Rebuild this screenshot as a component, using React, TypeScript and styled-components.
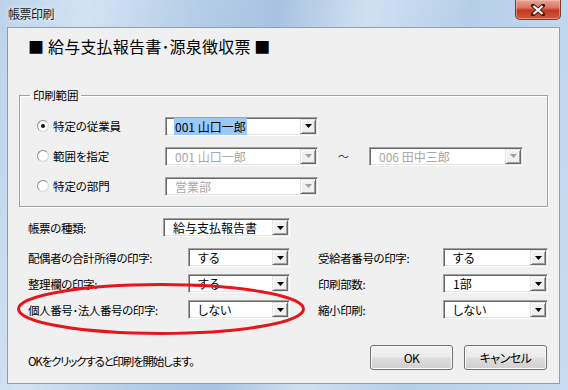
import styled, { createGlobalStyle } from "styled-components";

const GlobalStyle = createGlobalStyle`
    html, body {
        margin: 0;
        padding: 0;
        background: #ffffff;
    }
    body {
        font-family: "Noto Sans CJK JP", "Noto Sans", "Liberation Sans", sans-serif;
        font-feature-settings: "palt";
        color: #000000;
    }
`;

const Window = styled.div`
    position: relative;
    width: 568px;
    height: 390px;
    display: flex;
    flex-direction: column;
    box-sizing: border-box;
    overflow: hidden;
    background: linear-gradient(
        100deg,
        #bcd3eb 0%,
        #d3e3f3 14%,
        #b3cce7 32%,
        #a8c3e1 44%,
        #cfe0f2 58%,
        #b6cfe9 74%,
        #c8dcf0 100%
    );
`;

const TitleBar = styled.div`
    height: 27px;
    display: flex;
    align-items: flex-start;
    flex-shrink: 0;
`;

const Title = styled.div`
    margin: 6px 0 0 8px;
    font-size: 12px;
    line-height: 16px;
    letter-spacing: -0.5px;
    color: #1b1b1b;
    text-shadow: 0 0 6px rgba(255, 255, 255, 0.9);
`;

const CloseButton = styled.div`
    margin-left: auto;
    margin-right: 7px;
    width: 46px;
    height: 20px;
    box-sizing: border-box;
    display: flex;
    align-items: center;
    justify-content: center;
    border: 1px solid #7a3a30;
    border-top: none;
    border-radius: 0 0 5px 5px;
    background: linear-gradient(180deg, #e6a898 0%, #d9735f 40%, #c2391f 55%, #cf5a3c 100%);
    box-shadow: inset 0 0 0 1px rgba(255, 200, 190, 0.45);
`;

const Client = styled.div`
    flex: 1;
    margin: 0 8px 6px 7px;
    border: 1px solid #8a9db3;
    background: #f0f0f0;
    display: flex;
    flex-direction: column;
`;

const Heading = styled.div`
    margin: 10px 0 0 20px;
    font-size: 16px;
    line-height: 16px;
    letter-spacing: 0.2px;
`;

const Group = styled.fieldset`
    margin: 35px 11px 0 11px;
    padding: 10px 0 5px 0;
    border: 1px solid #a0a0a0;
    box-shadow: inset 1px 1px 0 #ffffff, 1px 1px 0 #ffffff;
    min-width: 0;
`;

const Legend = styled.legend`
    margin-left: 10px;
    padding: 0 3px;
    font-size: 11.5px;
    line-height: 12px;
    letter-spacing: -0.2px;
`;

const RangeRow = styled.div`
    height: 30px;
    padding-left: 17px;
    display: flex;
    align-items: center;
`;

const RadioLabel = styled.label`
    width: 128px;
    display: flex;
    align-items: center;
    gap: 4px;
    font-size: 11.5px;
    letter-spacing: -0.1px;
`;

const Radio = styled.span<{ $checked?: boolean }>`
    width: 12px;
    height: 12px;
    box-sizing: border-box;
    border-radius: 50%;
    border: 1px solid #8f8f8f;
    border-right-color: #d8d8d8;
    border-bottom-color: #d8d8d8;
    background: radial-gradient(circle at 50% 50%, #ffffff 55%, #e8e8e8 100%);
    display: flex;
    align-items: center;
    justify-content: center;
    &::after {
        content: "";
        width: 4px;
        height: 4px;
        border-radius: 50%;
        background: ${(p) => (p.$checked ? "#111111" : "transparent")};
    }
`;

const Tilde = styled.span`
    width: 51px;
    text-align: center;
    font-size: 11px;
    color: #333333;
`;

const Combo = styled.div<{ $w: number; $disabled?: boolean }>`
    width: ${(p) => p.$w}px;
    height: 19px;
    box-sizing: border-box;
    display: flex;
    align-items: center;
    padding: 1px;
    background: #ffffff;
    border: 1px solid;
    border-color: #a0a0a0 #ffffff #ffffff #a0a0a0;
    box-shadow: inset 1px 1px 0 #696969, inset -1px -1px 0 #e3e3e3;
    color: ${(p) => (p.$disabled ? "#a8a8a8" : "#000000")};
    flex-shrink: 0;
`;

const ComboText = styled.span`
    flex: 1;
    padding-left: 8px;
    font-size: 12px;
    line-height: 15px;
    white-space: nowrap;
`;

const Selected = styled.span`
    background: #99c9f4;
    padding: 0 1px;
    margin-left: -1px;
`;

const DropButton = styled.span<{ $disabled?: boolean }>`
    width: 16px;
    height: 15px;
    box-sizing: border-box;
    display: flex;
    align-items: center;
    justify-content: center;
    background: #f0f0f0;
    border: 1px solid;
    border-color: #e3e3e3 #696969 #696969 #e3e3e3;
    box-shadow: inset 1px 1px 0 #ffffff, inset -1px -1px 0 #a0a0a0;
    color: ${(p) => (p.$disabled ? "#a0a0a0" : "#000000")};
`;

const Options = styled.div`
    margin: 11px 11px 0 20px;
    display: flex;
    flex-direction: column;
    gap: 7px;
`;

const OptionRow = styled.div<{ $first?: boolean }>`
    display: flex;
    align-items: center;
    margin-bottom: ${(p) => (p.$first ? "4px" : "0")};
`;

const Label = styled.span<{ $w: number }>`
    width: ${(p) => p.$w}px;
    flex-shrink: 0;
    font-size: 11.5px;
    letter-spacing: -0.4px;
    white-space: nowrap;
`;

const Spacer = styled.span`
    width: 28px;
    flex-shrink: 0;
`;

const Footer = styled.div`
    margin: 26px 12px 0 20px;
    display: flex;
    align-items: center;
`;

const Hint = styled.span`
    flex: 1;
    margin-top: 6px;
    font-size: 11.5px;
    letter-spacing: -1.2px;
`;

const Button = styled.button`
    width: 83px;
    height: 25px;
    margin-left: 11px;
    box-sizing: border-box;
    border: 1px solid #707070;
    border-radius: 3px;
    background: linear-gradient(180deg, #f2f2f2 0%, #ebebeb 48%, #dddddd 52%, #cfcfcf 100%);
    box-shadow: inset 0 0 0 1px #fcfcfc;
    font-family: inherit;
    font-feature-settings: "palt";
    font-size: 12px;
    letter-spacing: -0.5px;
    color: #000000;
    padding: 0;
`;

const Marker = styled.svg`
    position: absolute;
    left: 16px;
    top: 282px;
    pointer-events: none;
`;

const Arrow = () => (
    <svg width="7" height="4" viewBox="0 0 7 4">
        <path d="M0 0H7L3.5 4Z" fill="currentColor" />
    </svg>
);

type SelectProps = {
    width: number;
    value: React.ReactNode;
    disabled?: boolean;
};
const Select = (props: SelectProps) => {
    const { width, value, disabled } = props;
    return (
        <Combo $w={width} $disabled={disabled}>
            <ComboText>{value}</ComboText>
            <DropButton $disabled={disabled}>
                <Arrow />
            </DropButton>
        </Combo>
    );
};

const App = () => {
    return (
        <Window>
            <GlobalStyle />
            <TitleBar>
                <Title>帳票印刷</Title>
                <CloseButton>
                    <svg width="14" height="12" viewBox="0 0 14 12">
                        <path
                            d="M2 1.5L7 6M12 1.5L7 6M2 10.5L7 6M12 10.5L7 6"
                            stroke="#4a1a12"
                            strokeWidth="4"
                            strokeLinecap="square"
                        />
                        <path
                            d="M2.5 2L11.5 10M11.5 2L2.5 10"
                            stroke="#ffffff"
                            strokeWidth="2.2"
                        />
                    </svg>
                </CloseButton>
            </TitleBar>
            <Client>
                <Heading>■ 給与支払報告書･源泉徴収票 ■</Heading>

                <Group>
                    <Legend>印刷範囲</Legend>
                    <RangeRow>
                        <RadioLabel>
                            <Radio $checked />
                            特定の従業員
                        </RadioLabel>
                        <Select width={153} value={<Selected>001 山口一郎</Selected>} />
                    </RangeRow>
                    <RangeRow>
                        <RadioLabel>
                            <Radio />
                            範囲を指定
                        </RadioLabel>
                        <Select width={153} value="001 山口一郎" disabled />
                        <Tilde>～</Tilde>
                        <Select width={154} value="006 田中三郎" disabled />
                    </RangeRow>
                    <RangeRow>
                        <RadioLabel>
                            <Radio />
                            特定の部門
                        </RadioLabel>
                        <Select width={153} value="営業部" disabled />
                    </RangeRow>
                </Group>

                <Options>
                    <OptionRow $first>
                        <Label $w={135}>帳票の種類:</Label>
                        <Select width={127} value="給与支払報告書" />
                    </OptionRow>
                    <OptionRow>
                        <Label $w={160}>配偶者の合計所得の印字:</Label>
                        <Select width={102} value="する" />
                        <Spacer />
                        <Label $w={125}>受給者番号の印字:</Label>
                        <Select width={105} value="する" />
                    </OptionRow>
                    <OptionRow>
                        <Label $w={160}>整理欄の印字:</Label>
                        <Select width={102} value="する" />
                        <Spacer />
                        <Label $w={125}>印刷部数:</Label>
                        <Select width={105} value="1部" />
                    </OptionRow>
                    <OptionRow>
                        <Label $w={160}>個人番号･法人番号の印字:</Label>
                        <Select width={102} value="しない" />
                        <Spacer />
                        <Label $w={125}>縮小印刷:</Label>
                        <Select width={105} value="しない" />
                    </OptionRow>
                </Options>

                <Footer>
                    <Hint>OKをクリックすると印刷を開始します。</Hint>
                    <Button>OK</Button>
                    <Button>キャンセル</Button>
                </Footer>
            </Client>

            <Marker width="292" height="56" viewBox="0 0 292 56">
                <ellipse cx="145" cy="27" rx="142.5" ry="24.5" fill="none" stroke="#e8141c" strokeWidth="3" />
            </Marker>
        </Window>
    );
};

export default App;
